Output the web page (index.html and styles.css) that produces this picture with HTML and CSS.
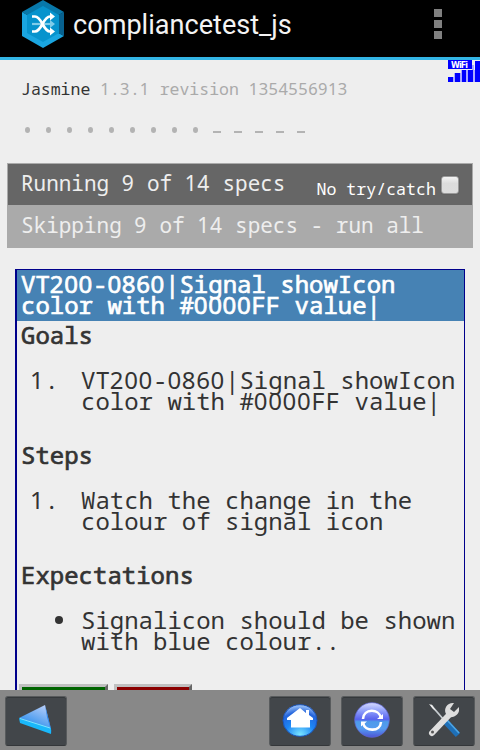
FILE: index.html
```
<!DOCTYPE html>
<html lang="en">
<head>
<meta charset="utf-8">
<title>compliancetest_js</title>
<link rel="stylesheet" href="styles.css">
</head>
<body>
<header class="appbar">
  <svg class="logo" width="44" height="49" viewBox="0 0 44 49">
    <path fill="#0878aa" d="M21 0 42 12 21 24 0 12Z"/>
    <path fill="#1aa5e0" d="M0 12V36L21 48 42 36 21 24Z"/>
    <path fill="#07618f" d="M42 12V36L36 33V15Z"/>
    <path fill="#0793cd" d="M21 6 37 15V33L21 42 5 33V15Z"/>
    <path stroke="#80cce9" stroke-width="2.2" d="M10 24H30"/>
    <path fill="#80cce9" d="m28 20 5 4-5 4z"/>
    <g fill="none" stroke="#fff" stroke-width="2.7"><path d="M10 16.5h3c7 0 8 15 15 15h2M10 31.5h3c7 0 8-15 15-15h2"/></g>
    <path fill="#fff" d="m28 12.5 5 4-5 4zM28 27.5l5 4-5 4z"/>
  </svg>
  <h1 class="title">compliancetest_js</h1>
  <div class="overflow"><i></i><i></i><i></i></div>
</header>
<main class="page">
  <svg class="signal" width="32" height="22" viewBox="0 0 32 22">
    <path fill="#aaf" d="M5 17h1v5H5zM6 13h7v9H6zM13 10h14v12H13zM24 5h2v17h-2z"/>
    <path fill="#00f" d="M0 0h24v9H0zM0 17h5v5H0zM7 13h5v9H7zM14 10h4v12h-4zM20 10h5v12h-5zM27 1h5v21h-5z"/>
    <text x="3" y="7.6" textLength="17">WiFi</text>
  </svg>
  <div class="banner">Jasmine <span class="version"><span class="num">1</span>.<span class="num">3</span>.<span class="num">1</span> revision <span class="num">1354556913</span></span></div>
  <div class="symbols"><i class="dot"></i><i class="dot"></i><i class="dot"></i><i class="dot"></i><i class="dot"></i><i class="dot"></i><i class="dot"></i><i class="dot"></i><i class="dot"></i><i class="dash"></i><i class="dash"></i><i class="dash"></i><i class="dash"></i><i class="dash"></i></div>
  <div class="alert">
    <div class="bar running"><span>Running <span class="num">9</span> of <span class="num">14</span> specs</span><label class="catch">No try/catch<span class="box"></span></label></div>
    <div class="bar skipped"><span>Skipping <span class="num">9</span> of <span class="num">14</span> specs - run all</span></div>
  </div>
  <section class="spec">
    <h2 class="name">VT<span class="num">200</span>-<span class="num">0860</span>|Signal showIcon<br>color with #<span class="num">0000</span>FF value|</h2>
    <h3>Goals</h3>
    <div class="item"><span class="mark"><span class="num">1</span>.</span><p>VT<span class="num">200</span>-<span class="num">0860</span>|Signal showIcon<br>color with #<span class="num">0000</span>FF value|</p></div>
    <h3>Steps</h3>
    <div class="item"><span class="mark"><span class="num">1</span>.</span><p>Watch the change in the<br>colour of signal icon</p></div>
    <h3>Expectations</h3>
    <div class="item"><span class="mark"><i class="bullet"></i></span><p>Signalicon should be shown<br>with blue colour..</p></div>
    <div class="verdict"><span class="btn pass"></span><span class="btn fail"></span></div>
  </section>
</main>
<footer class="toolbar">
  <span class="tool back"><svg width="36" height="34" viewBox="0 0 36 34">
    <defs><linearGradient id="tri" x1="1" y1="0" x2=".4" y2="1"><stop offset="0" stop-color="#c5d4fa"/><stop offset="1" stop-color="#258bec"/></linearGradient></defs>
    <path fill="url(#tri)" d="M27 2 1 15 33 26Z"/><path fill="#2b83e8" d="M27 2 33 26 34 31 29 14Z"/>
    <path fill="#19b8fb" d="M1 15 33 25 33 31 2 20Z"/><path stroke="#81e2ff" d="M2 15.5 32 25"/>
  </svg></span>
  <span class="tool"><svg width="36" height="34" viewBox="0 0 36 34">
    <defs><radialGradient id="orb" cx=".5" cy=".95" r=".95"><stop offset="0" stop-color="#7be6ff"/><stop offset=".45" stop-color="#1c86f5"/><stop offset=".75" stop-color="#2465dd"/><stop offset="1" stop-color="#a9cdfb"/></radialGradient></defs>
    <ellipse cx="18" cy="17.5" rx="17" ry="15.8" fill="url(#orb)" stroke="#1a55bd"/>
    <path fill="#fff" d="M18 5 5 15v2h4v7.5h19V17h3v-2l-4-3V7h-3v3Z"/>
  </svg></span>
  <span class="tool"><svg width="36" height="36" viewBox="0 0 36 36">
    <defs><linearGradient id="sync" x2="0" y2="1"><stop offset="0" stop-color="#d8dcff"/><stop offset=".25" stop-color="#8b9bfa"/><stop offset=".48" stop-color="#5862ee"/><stop offset=".55" stop-color="#4e9bea"/><stop offset=".75" stop-color="#549cf0"/><stop offset="1" stop-color="#4d54d5"/></linearGradient></defs>
    <circle cx="18" cy="18" r="17.3" fill="url(#sync)" stroke="#6268d8" stroke-width=".7"/>
    <path fill="none" stroke="#fff" stroke-width="2.6" d="M9 17C9.500 6.500 25 6 27 16M27 20C26.500 30 11 30 9 21"/>
    <path fill="#fff" d="M23 17h6v-5zM13 19.500H7v5z"/>
  </svg></span>
  <span class="tool"><svg width="36" height="36" viewBox="0 0 36 36">
    <path d="M5 3 18 18" stroke="#c6ccd0" stroke-width="1.8"/><path d="m3 2 3 1 4 6-3-2z" fill="#eee"/>
    <path d="M19 19 32 33" stroke="#1e6fb7" stroke-width="6"/><path d="m21 18 12 13" stroke="#4da5e4" stroke-width="1.5"/>
    <path d="M6 31 23 13" stroke="#dedede" stroke-width="6" stroke-linecap="round"/>
    <path d="M28 1C22 0 17 6 20 12c2 5 11 4 13-3V5l-5 5-4-3z" fill="#ddd"/>
    <circle cx="6.5" cy="30" r="1.5" fill="#555"/>
  </svg></span>
</footer>
</body>
</html>
```
FILE: styles.css
```
* { box-sizing: border-box; }
body {
  margin: 0;
  width: 480px;
  height: 750px;
  overflow: hidden;
  display: flex;
  flex-direction: column;
  background: #eee;
  color: #333;
  font-family: "Droid Sans Mono", "Noto Sans Mono", "DejaVu Sans Mono", monospace;
}
h1, h2, h3, p { margin: 0; font-weight: 400; }
.num { font-family: "Noto Sans", sans-serif; letter-spacing: .028em; line-height: 0; }
.appbar {
  flex: none;
  height: 60px;
  display: flex;
  padding-left: 22px;
  background: #000;
  border-bottom: 3px solid #33b5e5;
}
.title { margin-left: 7px; width: 219px; font: 27.1px/50px Roboto, sans-serif; color: #f3f3f3; white-space: nowrap; }
.overflow { display: flex; flex-direction: column; gap: 3px; margin: 9px 0 0 142px; }
.overflow i { width: 8px; height: 8px; background: #808080; }
.page { position: relative; height: 630px; overflow: hidden; }
.signal { position: absolute; right: 0; top: 0; }
.signal text { font: bold 8px "DejaVu Sans", sans-serif; fill: #fff; }
.banner { padding: 18px 0 0 21px; font-size: 16.5px; line-height: 22px; white-space: nowrap; }
.version { color: #aaa; }
.symbols { display: flex; height: 20px; margin: 20px 0 0 17px; }
.symbols i { width: 21px; display: flex; justify-content: center; align-items: center; }
.symbols i::before { content: ""; background: #b3b3b3; }
.dot::before { width: 5px; height: 6px; border-radius: 50%; }
.dash::before { width: 8px; height: 2px; margin-top: 4px; }
.alert { margin: 23px 7px 0; border: 1px solid #aaa; }
.bar { height: 42px; padding-left: 13px; display: flex; font-size: 20.99px; line-height: 40px; color: #eee; white-space: pre; }
.running { height: 41px; background: #666; line-height: 38px; }
.skipped { background: #aaa; }
.catch { margin-left: 31px; display: flex; font-size: 16.6px; line-height: 50px; color: #fff; }
.box {
  width: 18px; height: 18px; margin: 12px 0 0 5px;
  border: 1px solid #999; border-radius: 3px;
  background: linear-gradient(#f3f3f3, #dcdcdc 40%, #ddd);
  box-shadow: 0 0 1px #444;
}
.spec {
  width: 450px; height: 460px; margin: 21px 0 0 15px;
  border: 1px solid #00008b; border-left-width: 2px;
  font-size: 24px; line-height: 21px; white-space: nowrap;
}
.name, h3 { font-size: inherit; -webkit-text-stroke: .7px currentColor; }
.name { height: 51px; padding: 3px 4px; background: #4682b4; color: #fff; }
h3 { height: 30px; padding: 3px 4px; }
.item { display: flex; height: 90px; padding-top: 18px; }
.mark { width: 64px; padding-left: 13px; }
.bullet { display: block; width: 8px; height: 8px; margin: 7px 0 0 25px; border-radius: 50%; background: #333; }
.verdict { display: flex; gap: 6px; margin: 3px 0 0 2px; }
.btn { width: 89px; height: 42px; border: 3px solid #c0c0c0; border-right-color: #666; border-bottom-color: #666; }
.pass { background: #006400; }
.fail { width: 78px; background: #8b0000; }
.toolbar { flex: none; height: 60px; display: flex; gap: 10px; padding: 6px 5px 4px; background: #888; }
.tool {
  width: 62px; height: 50px; display: flex; align-items: center; justify-content: center;
  background: #42464a; border: 1px solid #585b5d; border-bottom-color: #34373a; border-radius: 3px;
  box-shadow: inset 0 1px #34383b;
}
.tool svg { margin-top: -3px; }
.back { margin-right: 192px; }
```
